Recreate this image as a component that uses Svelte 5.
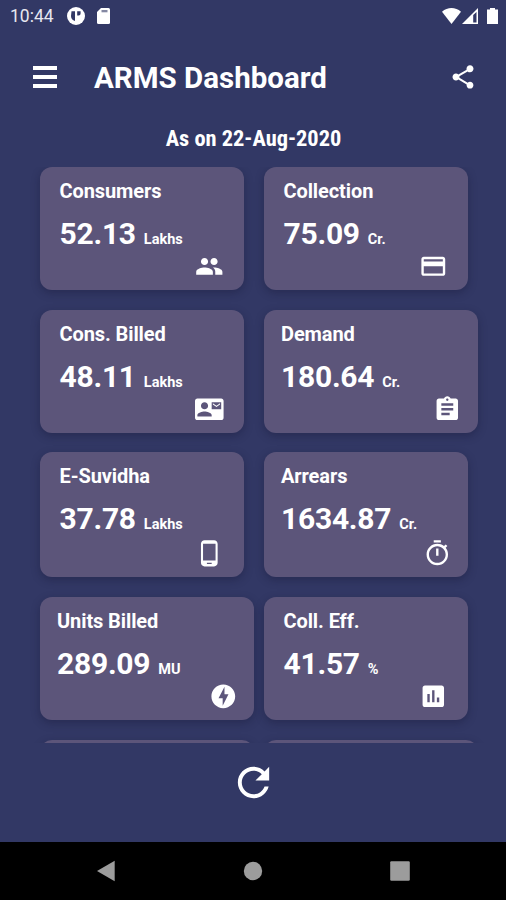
<!-- App.svelte -->
<script>
    const icons = {
        people: "M16 11c1.66 0 2.99-1.34 2.99-3S17.66 5 16 5c-1.66 0-3 1.34-3 3s1.34 3 3 3zm-8 0c1.66 0 2.99-1.34 2.99-3S9.66 5 8 5C6.34 5 5 6.34 5 8s1.34 3 3 3zm0 2c-2.33 0-7 1.17-7 3.5V19h14v-2.5c0-2.33-4.67-3.5-7-3.5zm8 0c-.29 0-.62.02-.97.05 1.16.84 1.97 1.97 1.97 3.45V19h6v-2.5c0-2.33-4.67-3.5-7-3.5z",
        card: "M20 4H4c-1.11 0-1.99.89-1.99 2L2 18c0 1.11.89 2 2 2h16c1.11 0 2-.89 2-2V6c0-1.11-.89-2-2-2zm0 14H4v-6h16v6zm0-10H4V6h16v2z",
        contact: "M21 8V7l-3 2-3-2v1l3 2 3-2zm1-5H2C.9 3 0 3.9 0 5v14c0 1.1.9 2 2 2h20c1.1 0 1.99-.9 1.99-2L24 5c0-1.1-.9-2-2-2zM8 6c1.66 0 3 1.34 3 3s-1.34 3-3 3-3-1.34-3-3 1.34-3 3-3zm6 12H2v-1c0-2 4-3.1 6-3.1s6 1.1 6 3.1v1zm8-6h-8V6h8v6z",
        clipboard: "M19 3h-4.18C14.4 1.84 13.3 1 12 1c-1.3 0-2.4.84-2.82 2H5c-1.1 0-2 .9-2 2v14c0 1.1.9 2 2 2h14c1.1 0 2-.9 2-2V5c0-1.1-.9-2-2-2zm-7 0c.55 0 1 .45 1 1s-.45 1-1 1-1-.45-1-1 .45-1 1-1zm2 14H7v-2h7v2zm3-4H7v-2h10v2zm0-4H7V7h10v2z",
        phone: "M16 1H8C6.34 1 5 2.34 5 4v16c0 1.66 1.34 3 3 3h8c1.66 0 3-1.34 3-3V4c0-1.66-1.34-3-3-3zm-2 20h-4v-1h4v1zm3.25-3H6.75V4h10.5v14z",
        timer: "M15 1H9v2h6V1zm-4 13h2V8h-2v6zm8.03-6.61l1.42-1.42c-.43-.51-.9-.99-1.41-1.41l-1.42 1.42C16.07 4.74 14.12 4 12 4c-4.97 0-9 4.03-9 9s4.02 9 9 9 9-4.03 9-9c0-2.12-.74-4.07-1.97-5.61zM12 20c-3.87 0-7-3.13-7-7s3.13-7 7-7 7 3.13 7 7-3.13 7-7 7z",
        bolt: "M12 2.02c-5.51 0-9.98 4.47-9.98 9.98s4.47 9.98 9.98 9.98 9.98-4.47 9.98-9.98S17.51 2.02 12 2.02zM11.48 20v-6.26H8L13 4v6.26h3.35L11.48 20z",
        poll: "M19 3H5c-1.1 0-2 .9-2 2v14c0 1.1.9 2 2 2h14c1.1 0 2-.9 2-2V5c0-1.1-.9-2-2-2zM9 17H7v-7h2v7zm4 0h-2V7h2v10zm4 0h-2v-4h2v4z",
    };

    // wide cards are the ones that stretch past the base column width
    const cards = [
        { label: "Consumers", value: "52.13", unit: "Lakhs", icon: "people" },
        { label: "Collection", value: "75.09", unit: "Cr.", icon: "card" },
        { label: "Cons. Billed", value: "48.11", unit: "Lakhs", icon: "contact" },
        { label: "Demand", value: "180.64", unit: "Cr.", icon: "clipboard", tight: true, wide: true },
        { label: "E-Suvidha", value: "37.78", unit: "Lakhs", icon: "phone" },
        { label: "Arrears", value: "1634.87", unit: "Cr.", icon: "timer", tight: true },
        { label: "Units Billed", value: "289.09", unit: "MU", icon: "bolt", tight: true, wide: true },
        { label: "Coll. Eff.", value: "41.57", unit: "%", icon: "poll" },
    ];
</script>

<div class="screen">
    <div class="status-bar">
        <span class="time">10:44</span>
        <svg class="app-icon" viewBox="0 0 18 18">
            <circle cx="9" cy="9" r="9" />
            <path class="cut" d="M4.5 4.2H8V14C5.5 13.5 4 11.5 4 9zM10.2 4.2h3.4v2.4a2 2 0 0 1-2 2h-1.4z" />
        </svg>
        <svg class="sd-icon" viewBox="0 0 13 16">
            <path d="M4 0h7.5A1.5 1.5 0 0 1 13 1.5v13a1.5 1.5 0 0 1-1.5 1.5h-10A1.5 1.5 0 0 1 0 14.5V4z" />
            <path class="cut soft" d="M4.5 2h6v2.3h-6z" />
        </svg>
        <svg class="wifi" viewBox="0 0 19 16">
            <path d="M0 3.7C5.5-1.2 13.5-1.2 19 3.7L9.5 16z" />
        </svg>
        <svg class="signal" viewBox="0 0 17 16">
            <path fill-rule="evenodd" d="M0 16 16 0v16zM11.2 7v7.5h3.3V4z" />
        </svg>
        <svg class="battery" viewBox="0 0 11 16">
            <path d="M3 0h5v1.5h3V16H0V1.5h3z" />
        </svg>
    </div>

    <header>
        <button class="menu" aria-label="Menu">
            <span></span>
            <span></span>
            <span></span>
        </button>
        <h1>ARMS Dashboard</h1>
        <svg class="share" viewBox="0 0 24 24">
            <path d="M18 16.08c-.76 0-1.44.3-1.96.77L8.91 12.7c.05-.23.09-.46.09-.7s-.04-.47-.09-.7l7.05-4.11c.54.5 1.25.81 2.04.81 1.66 0 3-1.34 3-3s-1.34-3-3-3-3 1.34-3 3c0 .24.04.47.09.7L8.04 9.81C7.5 9.31 6.79 9 6 9c-1.66 0-3 1.34-3 3s1.34 3 3 3c.79 0 1.5-.31 2.04-.81l7.12 4.16c-.05.21-.08.43-.08.65 0 1.61 1.31 2.92 2.92 2.92s2.92-1.31 2.92-2.92-1.31-2.92-2.92-2.92z" />
        </svg>
    </header>

    <p class="as-on">As on 22-Aug-2020</p>

    <main>
        {#each cards as card}
            <div class="card" class:tight={card.tight} class:wide={card.wide}>
                <h2>{card.label}</h2>
                <div class="amount">
                    <span class="value">{card.value}</span>
                    <span class="unit">{card.unit}</span>
                </div>
                <svg class="icon" viewBox="0 0 24 24"><path d={icons[card.icon]} /></svg>
            </div>
        {/each}
        <!-- next row, only its top edge shows until the list is scrolled -->
        <div class="card wide"></div>
        <div class="card wide"></div>
    </main>

    <div class="refresh">
        <svg viewBox="0 0 24 24">
            <path d="M17.65 6.35C16.2 4.9 14.21 4 12 4c-4.42 0-7.99 3.58-7.99 8s3.57 8 7.99 8c3.73 0 6.84-2.55 7.73-6h-2.08c-.82 2.33-3.04 4-5.65 4-3.31 0-6-2.69-6-6s2.69-6 6-6c1.66 0 3.14.69 4.22 1.78L13 11h7V4l-2.35 2.35z" />
        </svg>
    </div>

    <nav>
        <svg viewBox="0 0 22 22"><path d="M2 11 19.7.7v20.6z" /></svg>
        <svg viewBox="0 0 22 22"><circle cx="11" cy="11" r="9.2" /></svg>
        <svg viewBox="0 0 22 22"><rect x="1.2" y="1.2" width="19.6" height="19.6" rx="1.2" /></svg>
    </nav>
</div>

<style>
    :global(body) {
        margin: 0;
        background: #323865;
    }

    .screen {
        width: 506px;
        height: 900px;
        display: flex;
        flex-direction: column;
        overflow: hidden;
        background: #323865;
        color: #fff;
        font-family: Roboto, "Liberation Sans", sans-serif;
    }

    svg {
        display: block;
        flex: none;
        fill: #fff;
    }

    .status-bar {
        height: 31px;
        flex: none;
        display: flex;
        align-items: center;
        padding: 0 8px 0 10px;
        box-sizing: border-box;
    }

    .time {
        width: 57px;
        font-size: 17.5px;
        color: #e6e7f0;
    }

    .app-icon {
        width: 18px;
        height: 18px;
    }

    .cut {
        fill: #323865;
    }

    .soft {
        opacity: 0.6;
    }

    .sd-icon {
        width: 13px;
        height: 16px;
        margin-left: 12px;
    }

    .wifi {
        width: 19px;
        height: 16px;
        margin-left: auto;
    }

    .signal {
        width: 17px;
        height: 16px;
        margin-left: 1px;
    }

    .battery {
        width: 11px;
        height: 16px;
        margin-left: 8px;
    }

    header {
        height: 91px;
        flex: none;
        display: flex;
        align-items: center;
        padding: 0 29px 0 33px;
    }

    .menu {
        width: 24px;
        padding: 0;
        border: none;
        background: none;
        display: flex;
        flex-direction: column;
        gap: 5px;
    }

    .menu span {
        height: 4px;
        background: #fff;
    }

    h1 {
        margin: 0 auto 0 37px;
        padding-top: 2px;
        font-size: 29.5px;
        font-weight: 700;
        line-height: 34px;
        white-space: nowrap;
    }

    .share {
        width: 28px;
        height: 28px;
    }

    .as-on {
        height: 45px;
        flex: none;
        margin: 0;
        padding: 3px 0 0 1px;
        box-sizing: border-box;
        text-align: center;
        font-family: "Roboto Condensed", Roboto, sans-serif;
        font-stretch: condensed;
        font-size: 22.4px;
        font-weight: 700;
        line-height: 26px;
    }

    main {
        height: 576px;
        flex: none;
        display: grid;
        grid-template-columns: 224px 224px;
        grid-template-rows: 123px 123px 125px 123px 123px;
        row-gap: 19.7px;
        align-content: start;
        padding-left: 39.5px;
        box-sizing: border-box;
        overflow: hidden;
    }

    .card {
        width: 204.5px;
        padding: 12px 20px 9.5px;
        box-sizing: border-box;
        display: flex;
        flex-direction: column;
        border-radius: 12px;
        background: #5c557a;
        box-shadow: 0 3px 8px rgba(20, 20, 50, 0.35);
    }

    .card.wide {
        width: 214px;
    }

    .card.tight {
        padding-left: 17.5px;
        padding-right: 16px;
    }

    h2 {
        margin: 0;
        font-size: 20px;
        font-weight: 700;
        line-height: 24px;
        letter-spacing: -0.1px;
    }

    .amount {
        height: 36px;
        margin-top: 13px;
        display: flex;
        align-items: baseline;
        gap: 8px;
        line-height: 36px;
    }

    .value {
        font-size: 30px;
        font-weight: 700;
        letter-spacing: -0.25px;
    }

    .unit {
        font-size: 14.5px;
        font-weight: 700;
    }

    .icon {
        width: 28.6px;
        height: 28.6px;
        margin-top: auto;
        align-self: flex-end;
    }

    .refresh {
        height: 99px;
        flex: none;
        display: flex;
        justify-content: center;
        padding: 16px 0 0 1px;
        box-sizing: border-box;
    }

    .refresh svg {
        width: 47px;
        height: 47px;
    }

    nav {
        flex: 1;
        display: flex;
        justify-content: space-between;
        align-items: center;
        padding: 0 95px 0 95px;
        background: #000;
    }

    nav svg {
        width: 22px;
        height: 22px;
        fill: #9c9c9c;
    }
</style>
